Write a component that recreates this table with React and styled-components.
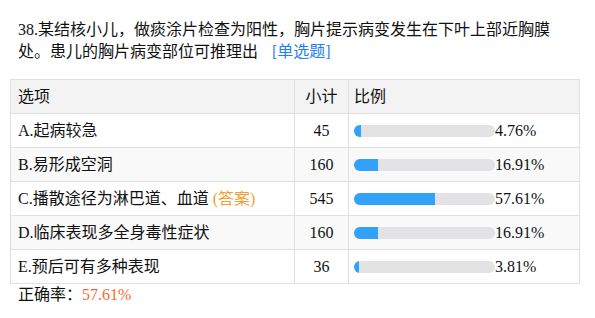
import React from 'react'
import styled, { createGlobalStyle } from 'styled-components'

const GlobalStyle = createGlobalStyle`
  body {
    margin: 0;
    background: #fff;
    font-family: "Liberation Serif", "Noto Sans CJK SC", serif;
    color: #111;
  }
`

const options = [
  { label: 'A.', text: '起病较急', count: 45, pct: 4.76 },
  { label: 'B.', text: '易形成空洞', count: 160, pct: 16.91 },
  { label: 'C.', text: '播散途径为淋巴道、血道', count: 545, pct: 57.61, answer: true },
  { label: 'D.', text: '临床表现多全身毒性症状', count: 160, pct: 16.91 },
  { label: 'E.', text: '预后可有多种表现', count: 36, pct: 3.81 },
]

export default function App() {
  return (
    <>
      <GlobalStyle />
      <Container>
        <Question>
          38.某结核小儿，做痰涂片检查为阳性，胸片提示病变发生在下叶上部近胸膜处。患儿的胸片病变部位可推理出
          <QType>[单选题]</QType>
        </Question>
        <Table>
          <colgroup>
            <Col $w={284} />
            <Col $w={54} />
            <Col />
          </colgroup>
          <thead>
            <tr>
              <HeadCell>选项</HeadCell>
              <HeadCell $center>小计</HeadCell>
              <HeadCell $ratio>比例</HeadCell>
            </tr>
          </thead>
          <tbody>
            {options.map((o, i) => (
              <Row key={o.label} $striped={i % 2 === 1}>
                <OptionCell>
                  {o.label}{o.text}
                  {o.answer && <Answer>(答案)</Answer>}
                </OptionCell>
                <CountCell>{o.count}</CountCell>
                <RatioCell>
                  <RatioWrap>
                    <Bar>
                      <Fill style={{ width: `${o.pct}%` }} />
                    </Bar>
                    <Percent>{o.pct.toFixed(2)}%</Percent>
                  </RatioWrap>
                </RatioCell>
              </Row>
            ))}
          </tbody>
        </Table>
        <Accuracy>
          正确率：<Rate>57.61%</Rate>
        </Accuracy>
      </Container>
    </>
  )
}

const Container = styled.div`
  padding: 19px 16px 0 10px;
  width: 570px;
`

const Question = styled.div`
  padding-left: 8px;
  width: 540px;
  font-size: 16px;
  line-height: 22px;
  margin-bottom: 16px;
`

const QType = styled.span`
  display: inline-block;
  line-height: 22px;
  color: #1f80f5;
  margin-left: 14px;
`

const Table = styled.table`
  width: 570px;
  border-collapse: collapse;
  font-size: 16px;
  table-layout: fixed;
`

const Col = styled.col`
  width: ${p => (p.$w ? `${p.$w}px` : 'auto')};
`

const HeadCell = styled.th`
  height: 33px;
  padding: 0 ${p => (p.$ratio ? '5px' : '7px')};
  background: #f3f3f3;
  border: 1px solid #e0e0e0;
  font-weight: normal;
  text-align: ${p => (p.$center ? 'center' : 'left')};
  line-height: 20px;
`

const Row = styled.tr`
  background: ${p => (p.$striped ? '#f9f9f9' : '#fff')};
  td {
    height: 33px;
    border: 1px solid #e0e0e0;
    line-height: 20px;
  }
`

const OptionCell = styled.td`
  padding: 0 7px;
  white-space: nowrap;
`

const Answer = styled.span`
  color: #efa033;
  margin-left: 4px;
`

const CountCell = styled.td`
  text-align: center;
  padding: 0;
`

const RatioCell = styled.td`
  padding: 0 5px;
`

const RatioWrap = styled.div`
  display: flex;
  align-items: center;
`

const Bar = styled.div`
  width: 141px;
  height: 12px;
  border-radius: 6px;
  background: #e3e3e5;
  overflow: hidden;
  flex-shrink: 0;
`

const Fill = styled.div`
  height: 100%;
  background: #31a2f9;
`

const Percent = styled.span`
  font-size: 16px;
`

const Accuracy = styled.div`
  padding: 2px 8px;
  font-size: 16px;
  line-height: 18px;
`

const Rate = styled.span`
  color: #fb6a32;
`
